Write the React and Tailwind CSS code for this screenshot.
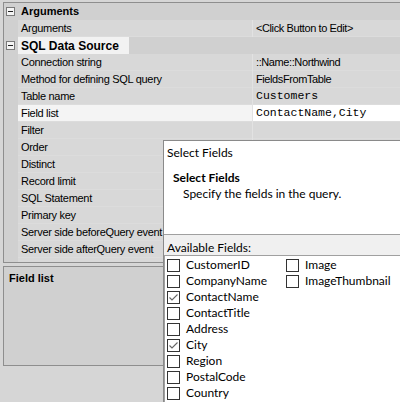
import React from "react";

const grid = { fontFamily: '"Liberation Sans", Arial, sans-serif' };
const mono = { fontFamily: '"Liberation Mono", "Courier New", monospace' };
const ui = { fontFamily: 'Lato, "Noto Sans", sans-serif' };

function Minus() {
  return (
    <div className="ml-[2px] w-[9px] h-[9px] border border-[#7a7a7a] bg-[#f4f4f4] flex items-center justify-center">
      <div className="w-[5px] h-[1px] bg-[#222]" />
    </div>
  );
}

function Cat({ label, big, hl }) {
  return (
    <div className="h-[17px] flex items-center shrink-0 bg-[#d0d0d0]">
      <div className="w-[14px] flex items-center">
        <Minus />
      </div>
      <div
        className={
          "h-[17px] flex items-center pl-[3px] pr-[10px] font-bold text-black " +
          (big ? "text-[12px] " : "text-[11px] ") +
          (hl ? "bg-[#f2f2f2]" : "")
        }
      >
        {label}
      </div>
    </div>
  );
}

function Prop({ name, value, monoVal, sel, low }) {
  return (
    <div className="h-[17px] flex shrink-0 bg-[#d0d0d0]">
      <div className="w-[14px] shrink-0" />
      <div
        className={
          "w-[234px] shrink-0 h-[17px] border-b border-[#dcdcdc] flex pl-[3px] text-[11px] tracking-[-0.3px] text-black whitespace-nowrap overflow-hidden " +
          (low ? "items-start pt-[3px] " : "items-center ") +
          (sel ? "bg-[#f4f4f4]" : "bg-[#d8d8d8]")
        }
      >
        {name}
      </div>
      <div className="w-[1px] shrink-0 bg-[#e2e2e2]" />
      <div
        className={
          "flex-1 h-[17px] border-b border-[#dcdcdc] flex items-center pl-[3px] text-black whitespace-nowrap " +
          (sel ? "bg-white " : "bg-[#d8d8d8] ") +
          (monoVal ? "text-[11.5px]" : "text-[11px] tracking-[-0.4px]")
        }
        style={monoVal ? mono : undefined}
      >
        {value}
      </div>
    </div>
  );
}

function Check({ checked }) {
  return (
    <div className="w-[13px] h-[13px] border border-[#333] bg-white shrink-0 flex items-center justify-center">
      {checked && (
        <svg width="11" height="11" viewBox="0 0 11 11">
          <path d="M1.5 5.5 L4 8 L9.5 2.5" fill="none" stroke="#666" strokeWidth="1.1" />
        </svg>
      )}
    </div>
  );
}

function Item({ label, checked }) {
  return (
    <div className="h-[16px] flex items-center gap-[6px] text-[12px] text-[#000] whitespace-nowrap">
      <Check checked={checked} />
      <span>{label}</span>
    </div>
  );
}

export default function App() {
  const col1 = [
    ["CustomerID", false],
    ["CompanyName", false],
    ["ContactName", true],
    ["ContactTitle", false],
    ["Address", false],
    ["City", true],
    ["Region", false],
    ["PostalCode", false],
    ["Country", false],
    ["Phone", false],
  ];
  return (
    <div className="w-[400px] h-[402px] overflow-hidden relative bg-[#d6d6d6]" style={grid}>
      <div className="pt-[2px] pl-[3px] flex flex-col">
        <div className="h-[261px] border-t border-l border-b border-[#8e8e8e] bg-[#d0d0d0] flex flex-col overflow-hidden">
          <Cat label="Arguments" />
          <Prop name="Arguments" value="<Click Button to Edit>" />
          <Cat label="SQL Data Source" big hl />
          <Prop name="Connection string" value="::Name::Northwind" />
          <Prop name="Method for defining SQL query" value="FieldsFromTable" />
          <Prop name="Table name" value="Customers" monoVal />
          <Prop name="Field list" value="ContactName,City" monoVal sel />
          <Prop name="Filter" value="" />
          <Prop name="Order" value="" />
          <Prop name="Distinct" value="" />
          <Prop name="Record limit" value="" />
          <Prop name="SQL Statement" value="" />
          <Prop name="Primary key" value="" />
          <Prop name="Server side beforeQuery event" value="" />
          <Prop name="Server side afterQuery event" value="" />
          <Prop name="Fetch options" value="" />
        </div>
        <div className="mt-[3px] h-[100px] border border-[#8e8e8e] bg-[#d0d0d0] px-[5px] pt-[3px]">
          <div className="text-[11px] font-bold text-black">Field list</div>
        </div>
      </div>

      <div
        className="absolute left-[163px] top-[140px] w-[260px] h-[280px] border border-[#8a8a8a] bg-white flex flex-col"
        style={ui}
      >
        <div className="h-[24px] flex items-center pl-[3px] text-[12px] text-black">Select Fields</div>
        <div className="h-[69px] bg-white pl-[9px] pt-[4px]">
          <div className="text-[12px] font-bold text-black leading-[17px]">Select Fields</div>
          <div className="text-[12px] text-black pl-[10px] leading-[16px]">Specify the fields in the query.</div>
        </div>
        <div className="h-[1px] bg-[#a0a0a0]" />
        <div className="flex-1 bg-[#f0f0f0] flex flex-col">
          <div className="h-[20px] pl-[3px] pt-[5px] text-[12px] leading-[15px] text-black">Available Fields:</div>
          <div className="flex-1 border-t border-l border-[#a0a0a0] bg-white pl-[2px] pt-[1px] flex">
            <div className="w-[119px] flex flex-col">
              {col1.map(([l, c]) => (
                <Item key={l} label={l} checked={c} />
              ))}
            </div>
            <div className="flex flex-col">
              <Item label="Image" />
              <Item label="ImageThumbnail" />
            </div>
          </div>
        </div>
      </div>
    </div>
  );
}
